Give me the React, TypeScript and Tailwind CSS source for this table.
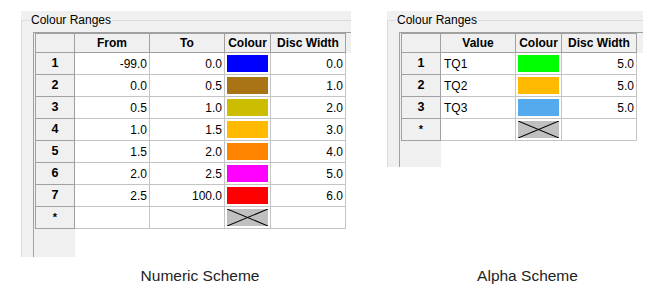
import type { ReactNode } from 'react';

type Column = { label: string; width: string; kind: 'right' | 'left' | 'colour' };
type Row = { cells: (string | null)[]; swatch: string | null };

const numericColumns: Column[] = [
    { label: 'From', width: 'w-[75px]', kind: 'right' },
    { label: 'To', width: 'w-[75px]', kind: 'right' },
    { label: 'Colour', width: 'w-[46px]', kind: 'colour' },
    { label: 'Disc Width', width: 'w-[75px]', kind: 'right' },
];

const alphaColumns: Column[] = [
    { label: 'Value', width: 'w-[75px]', kind: 'left' },
    { label: 'Colour', width: 'w-[46px]', kind: 'colour' },
    { label: 'Disc Width', width: 'w-[75px]', kind: 'right' },
];

// swatch classes are spelled out so tailwind picks them up
const numericRows: Row[] = [
    { cells: ['-99.0', '0.0', null, '0.0'], swatch: 'bg-[#0000ff]' },
    { cells: ['0.0', '0.5', null, '1.0'], swatch: 'bg-[#a97413]' },
    { cells: ['0.5', '1.0', null, '2.0'], swatch: 'bg-[#cdbd00]' },
    { cells: ['1.0', '1.5', null, '3.0'], swatch: 'bg-[#ffb900]' },
    { cells: ['1.5', '2.0', null, '4.0'], swatch: 'bg-[#ff8400]' },
    { cells: ['2.0', '2.5', null, '5.0'], swatch: 'bg-[#ff00ff]' },
    { cells: ['2.5', '100.0', null, '6.0'], swatch: 'bg-[#ff0000]' },
];

const alphaRows: Row[] = [
    { cells: ['TQ1', null, '5.0'], swatch: 'bg-[#00ff00]' },
    { cells: ['TQ2', null, '5.0'], swatch: 'bg-[#ffb900]' },
    { cells: ['TQ3', null, '5.0'], swatch: 'bg-[#55aaee]' },
];

const EmptySwatch = () => (
    <svg className="m-[2px] block h-[17px] w-[41px]" viewBox="0 0 41 17" shapeRendering="crispEdges">
        <rect width="41" height="17" fill="#c0c0c0" />
        <line x1="0" y1="0" x2="41" y2="17" stroke="#000" strokeWidth="1.1" shapeRendering="auto" />
        <line x1="41" y1="0" x2="0" y2="17" stroke="#000" strokeWidth="1.1" shapeRendering="auto" />
    </svg>
);

const Cell = ({ col, children }: { col: Column; children?: ReactNode }) => (
    <div
        className={`flex h-[22px] shrink-0 items-center border-r border-b border-[#c4c4c4] bg-white text-[12px] text-black ${col.width} ${
            col.kind === 'right' ? 'justify-end pr-[2px]' : col.kind === 'left' ? 'justify-start pl-[3px]' : 'justify-start'
        }`}
    >
        {children}
    </div>
);

const RowHeader = ({ children }: { children?: ReactNode }) => (
    <div className="flex h-[22px] w-[39px] shrink-0 items-center justify-center border-r border-b border-[#a0a0a0] bg-[#f0f0f0] text-[12.5px] font-bold text-black">
        {children}
    </div>
);

const ColourGrid = ({ columns, rows, height }: { columns: Column[]; rows: Row[]; height: string }) => (
    <div className={`ml-[11px] mt-[5px] flex border-l border-t border-[#a0a0a0] bg-white ${height}`}>
        <div className="w-px bg-[#f0f0f0]" />
        <div className="flex flex-1 flex-col">
            {/* column headers, band runs across the full width */}
            <div className="flex bg-[#f0f0f0]">
                <div className="flex border-l border-t border-[#a0a0a0]">
                    <div className="h-[19px] w-[39px] border-r border-b border-[#a0a0a0]" />
                    {columns.map(col => (
                        <div
                            key={col.label}
                            className={`flex h-[19px] items-center justify-center border-r border-b border-[#a0a0a0] text-[12px] font-bold text-black ${col.width}`}
                        >
                            {col.label}
                        </div>
                    ))}
                </div>
            </div>

            <div className="flex flex-col self-start border-l border-[#a0a0a0]">
                {rows.map((row, i) => (
                    <div key={i} className="flex">
                        <RowHeader>{i + 1}</RowHeader>
                        {columns.map((col, j) => (
                            <Cell key={j} col={col}>
                                {col.kind === 'colour' ? <div className={`m-[2px] h-[17px] w-[41px] ${row.swatch}`} /> : row.cells[j]}
                            </Cell>
                        ))}
                    </div>
                ))}
                <div className="flex">
                    <RowHeader>
                        <span className="text-[11px] leading-none">*</span>
                    </RowHeader>
                    {columns.map((col, j) => (
                        <Cell key={j} col={col}>
                            {col.kind === 'colour' ? <EmptySwatch /> : null}
                        </Cell>
                    ))}
                </div>
            </div>

            <div className="flex flex-1">
                <div className="w-[40px] bg-[#f0f0f0]" />
            </div>
        </div>
    </div>
);

const ColourRangesPanel = ({ columns, rows, height, gridHeight }: { columns: Column[]; rows: Row[]; height: string; gridHeight: string }) => (
    <div className={`flex flex-col bg-[#f0f0f0] pt-[2px] ${height}`}>
        <fieldset className="flex-1 border-l border-t border-[#dcdcdc]">
            <legend className="ml-[8px] px-px text-[12px] leading-[14px] text-black">Colour Ranges</legend>
            <ColourGrid columns={columns} rows={rows} height={gridHeight} />
        </fieldset>
    </div>
);

export default function App() {
    return (
        <div className="h-[297px] w-[666px] bg-white font-['Liberation_Sans',Arial,sans-serif]">
            <div className="grid grid-cols-[330px_256px] items-start gap-x-[36px] pl-[21px] pt-[11px]">
                <ColourRangesPanel columns={numericColumns} rows={numericRows} height="h-[246px]" gridHeight="h-[225px]" />
                <ColourRangesPanel columns={alphaColumns} rows={alphaRows} height="h-[156px]" gridHeight="h-[135px]" />

                <p className="mt-[10px] pl-[28px] text-center text-[15.5px] leading-[18px] text-[#222222]">Numeric Scheme</p>
                <p className="mt-[10px] pl-[25px] text-center text-[15.5px] leading-[18px] text-[#222222]">Alpha Scheme</p>
            </div>
        </div>
    );
}
